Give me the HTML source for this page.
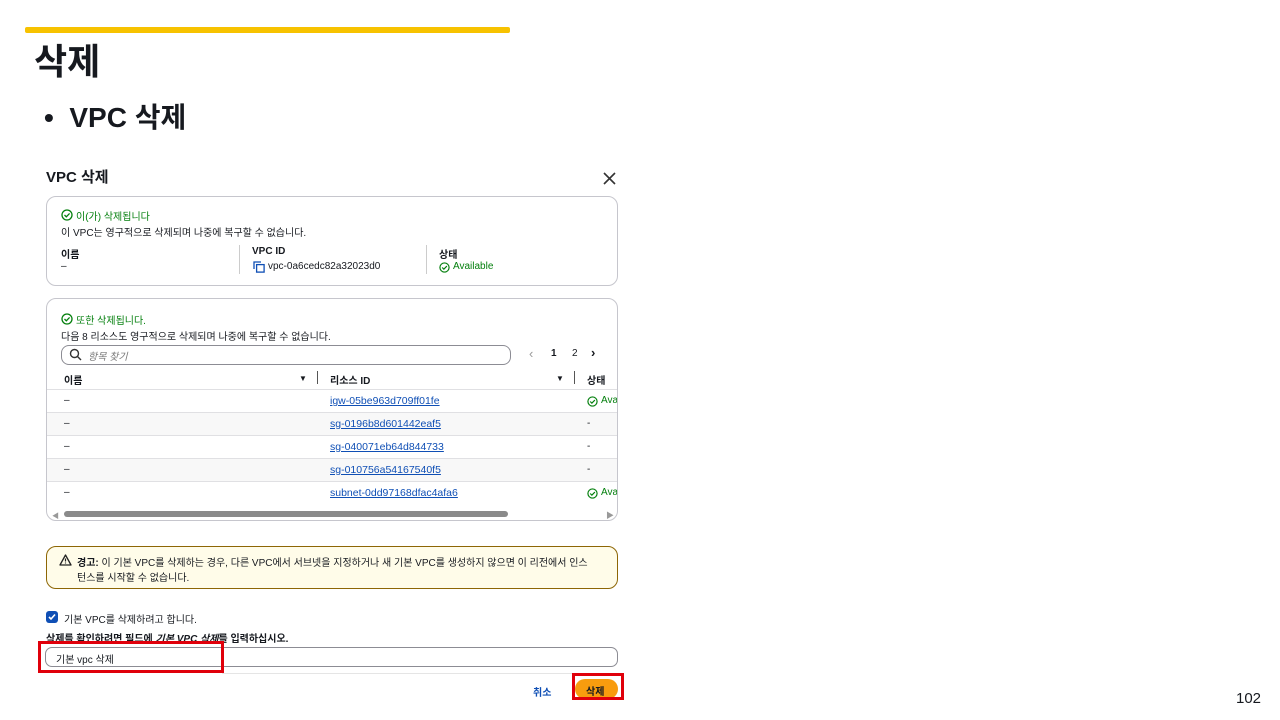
<!DOCTYPE html>
<html><head><meta charset="utf-8"><style>
*{margin:0;padding:0;box-sizing:border-box}
body{width:1280px;height:720px;background:#fff;position:relative;overflow:hidden;font-family:"Liberation Sans","Noto Sans CJK KR",sans-serif;color:#16191f}
.a{position:absolute;white-space:nowrap}
.box{position:absolute;border:1px solid #c6c6cd;border-radius:10px;background:#fff}
.s{font-size:10px}
.b{font-weight:bold}
.g{color:#037f0c}
.lnk{color:#0f4fb5;text-decoration:underline;text-decoration-color:#0f4fb5;font-size:10.5px}
.row{position:absolute;left:47px;width:570px;height:23px;border-top:1px solid #e0e0e3}
</style></head><body>
<div class="a" style="left:25px;top:27px;width:485px;height:6px;background:#f7c200;border-radius:2px"></div>
<div class="a b" style="left:34px;top:40px;font-size:36px;line-height:44px">삭제</div>
<div class="a b" style="left:44px;top:100px;font-size:28px;line-height:36px">•&nbsp; VPC 삭제</div>

<div class="a b" style="left:46px;top:168px;font-size:15px;line-height:20px">VPC 삭제</div>
<svg class="a" style="left:603px;top:172px" width="13" height="13" viewBox="0 0 13 13"><path d="M1 1L12 12M12 1L1 12" stroke="#333" stroke-width="1.6"/></svg>

<div class="box" style="left:46px;top:196px;width:572px;height:90px"></div>
<svg class="a" style="left:61px;top:209px" width="12" height="12" viewBox="0 0 12 12"><circle cx="6" cy="6" r="5" fill="none" stroke="#037f0c" stroke-width="1.3"/><path d="M3.5 6l1.8 1.8L8.6 4.4" fill="none" stroke="#037f0c" stroke-width="1.3"/></svg>
<div class="a s g" style="left:76px;top:208px">이(가) 삭제됩니다</div>
<div class="a s" style="left:61px;top:224px">이 VPC는 영구적으로 삭제되며 나중에 복구할 수 없습니다.</div>
<div class="a s b" style="left:61px;top:246px">이름</div>
<div class="a s" style="left:61px;top:261px">–</div>
<div class="a" style="left:239px;top:245px;width:1px;height:29px;background:#ccc"></div>
<div class="a s b" style="left:252px;top:246px">VPC ID</div>
<svg class="a" style="left:253px;top:261px" width="12" height="12" viewBox="0 0 12 12"><path d="M1 8V1h7" fill="none" stroke="#0f4fb5" stroke-width="1.3"/><rect x="3.6" y="3.6" width="7.5" height="7.5" fill="none" stroke="#0f4fb5" stroke-width="1.3"/></svg>
<div class="a s" style="left:268px;top:261px">vpc-0a6cedc82a32023d0</div>
<div class="a" style="left:426px;top:245px;width:1px;height:29px;background:#ccc"></div>
<div class="a s b" style="left:439px;top:246px">상태</div>
<svg class="a" style="left:439px;top:262px" width="11" height="11" viewBox="0 0 12 12"><circle cx="6" cy="6" r="5" fill="none" stroke="#037f0c" stroke-width="1.3"/><path d="M3.5 6l1.8 1.8L8.6 4.4" fill="none" stroke="#037f0c" stroke-width="1.3"/></svg>
<div class="a s g" style="left:453px;top:261px">Available</div>

<div class="box" style="left:46px;top:298px;width:572px;height:223px;overflow:hidden"></div>
<svg class="a" style="left:61px;top:313px" width="12" height="12" viewBox="0 0 12 12"><circle cx="6" cy="6" r="5" fill="none" stroke="#037f0c" stroke-width="1.3"/><path d="M3.5 6l1.8 1.8L8.6 4.4" fill="none" stroke="#037f0c" stroke-width="1.3"/></svg>
<div class="a s g" style="left:76px;top:312px">또한 삭제됩니다.</div>
<div class="a s" style="left:61px;top:328px">다음 8 리소스도 영구적으로 삭제되며 나중에 복구할 수 없습니다.</div>
<div class="a" style="left:61px;top:345px;width:450px;height:20px;border:1px solid #8c8c94;border-radius:8px"></div>
<svg class="a" style="left:69px;top:348px" width="13" height="13" viewBox="0 0 13 13"><circle cx="5.5" cy="5.5" r="4" fill="none" stroke="#333" stroke-width="1.4"/><path d="M8.5 8.5L12 12" stroke="#333" stroke-width="1.4"/></svg>
<div class="a s" style="left:88px;top:348px;color:#777;font-style:italic">항목 찾기</div>
<div class="a" style="left:529px;top:346px;font-size:13px;color:#999">‹</div>
<div class="a s b" style="left:551px;top:348px">1</div>
<div class="a s" style="left:572px;top:348px">2</div>
<div class="a b" style="left:591px;top:345px;font-size:13px">›</div>

<div class="a s b" style="left:64px;top:372px">이름</div>
<div class="a" style="left:299px;top:374px;font-size:8px">▼</div>
<div class="a" style="left:317px;top:371px;width:1px;height:13px;background:#555"></div>
<div class="a s b" style="left:330px;top:372px">리소스 ID</div>
<div class="a" style="left:556px;top:374px;font-size:8px">▼</div>
<div class="a" style="left:574px;top:371px;width:1px;height:13px;background:#555"></div>
<div class="a s b" style="left:587px;top:372px">상태</div>

<div class="row" style="top:389px"></div>
<div class="row" style="top:412px;background:#f8f8f8"></div>
<div class="row" style="top:435px"></div>
<div class="row" style="top:458px;background:#f8f8f8"></div>
<div class="row" style="top:481px"></div>
<div class="a s" style="left:64px;top:395px">–</div>
<div class="a s" style="left:64px;top:418px">–</div>
<div class="a s" style="left:64px;top:441px">–</div>
<div class="a s" style="left:64px;top:464px">–</div>
<div class="a s" style="left:64px;top:487px">–</div>
<div class="a lnk" style="left:330px;top:395px">igw-05be963d709ff01fe</div>
<div class="a lnk" style="left:330px;top:418px">sg-0196b8d601442eaf5</div>
<div class="a lnk" style="left:330px;top:441px">sg-040071eb64d844733</div>
<div class="a lnk" style="left:330px;top:464px">sg-010756a54167540f5</div>
<div class="a lnk" style="left:330px;top:487px">subnet-0dd97168dfac4afa6</div>
<svg class="a" style="left:587px;top:396px" width="11" height="11" viewBox="0 0 12 12"><circle cx="6" cy="6" r="5" fill="none" stroke="#037f0c" stroke-width="1.3"/><path d="M3.5 6l1.8 1.8L8.6 4.4" fill="none" stroke="#037f0c" stroke-width="1.3"/></svg>
<div class="a s g" style="left:601px;top:395px;width:16px;overflow:hidden">Ava</div>
<div class="a s" style="left:587px;top:418px">-</div>
<div class="a s" style="left:587px;top:441px">-</div>
<div class="a s" style="left:587px;top:464px">-</div>
<svg class="a" style="left:587px;top:488px" width="11" height="11" viewBox="0 0 12 12"><circle cx="6" cy="6" r="5" fill="none" stroke="#037f0c" stroke-width="1.3"/><path d="M3.5 6l1.8 1.8L8.6 4.4" fill="none" stroke="#037f0c" stroke-width="1.3"/></svg>
<div class="a s g" style="left:601px;top:487px;width:16px;overflow:hidden">Ava</div>
<div class="a" style="left:64px;top:511px;width:444px;height:6px;background:#8a8a8a;border-radius:3px"></div>
<div class="a" style="left:52px;top:511px;font-size:7px;color:#999">◀</div>
<div class="a" style="left:606px;top:510px;font-size:8px;color:#999">▶</div>

<div class="a" style="left:46px;top:546px;width:572px;height:43px;background:#fffce9;border:1.5px solid #8d6605;border-radius:10px"></div>
<svg class="a" style="left:59px;top:554px" width="13" height="12" viewBox="0 0 13 12"><path d="M6.5 1L12 11H1z" fill="none" stroke="#222" stroke-width="1.3" stroke-linejoin="round"/><path d="M6.5 4.5v3M6.5 8.5v1" stroke="#222" stroke-width="1.2"/></svg>
<div class="a s" style="left:77px;top:554px"><b>경고:</b> 이 기본 VPC를 삭제하는 경우, 다른 VPC에서 서브넷을 지정하거나 새 기본 VPC를 생성하지 않으면 이 리전에서 인스</div>
<div class="a s" style="left:77px;top:569px">턴스를 시작할 수 없습니다.</div>

<div class="a" style="left:46px;top:611px;width:12px;height:12px;background:#0f4fb5;border-radius:3px"></div>
<svg class="a" style="left:47px;top:612px" width="10" height="10" viewBox="0 0 10 10"><path d="M2 5l2 2 4-4.5" fill="none" stroke="#fff" stroke-width="1.6"/></svg>
<div class="a s" style="left:64px;top:611px">기본 VPC를 삭제하려고 합니다.</div>
<div class="a s b" style="left:46px;top:630px">삭제를 확인하려면 필드에 <i>기본 VPC 삭제</i>를 입력하십시오.</div>
<div class="a" style="left:45px;top:647px;width:573px;height:20px;border:1px solid #8c8c94;border-radius:7px"></div>
<div class="a s" style="left:56px;top:651px">기본 vpc 삭제</div>
<div class="a" style="left:38px;top:641px;width:186px;height:32px;border:3px solid #e0000b"></div>
<div class="a" style="left:222px;top:673px;width:396px;height:1px;background:#e5e5e5"></div>
<div class="a s b" style="left:533px;top:684px;color:#0f4fb5">취소</div>
<div class="a" style="left:575px;top:679px;width:43px;height:20px;background:#f89c0e;border-radius:10px"></div>
<div class="a s b" style="left:586px;top:683px">삭제</div>
<div class="a" style="left:572px;top:673px;width:52px;height:27px;border:3px solid #e0000b"></div>
<div class="a" style="left:1236px;top:690px;font-size:15px">102</div>
</body></html>
